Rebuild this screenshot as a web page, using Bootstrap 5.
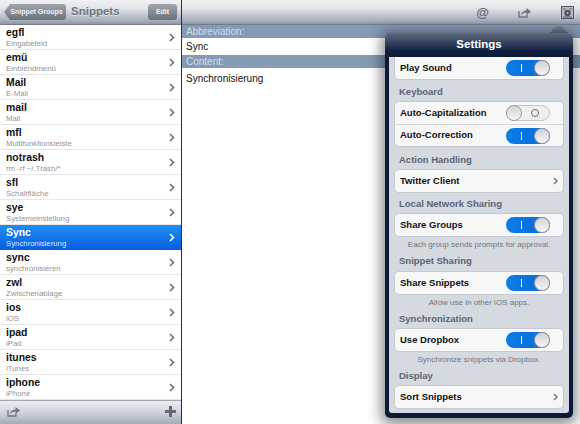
<!DOCTYPE html>
<html lang="en">
<head>
<meta charset="UTF-8">
<title>Snippets</title>
<link rel="stylesheet" href="https://cdn.jsdelivr.net/npm/bootstrap@5.3.3/dist/css/bootstrap.min.css">
<style>
html, body { margin: 0; height: 424px; overflow: hidden; background: #fff; font-family: "Liberation Sans", Arial, sans-serif; }
.app-shell { width: 580px; height: 424px; position: relative; }
.side-pane { width: 181px; height: 424px; border-right: 1px solid #2b2f36; box-sizing: content-box; }
.main-pane { width: 398px; height: 424px; }
.ios-bar { height: 25px; background: linear-gradient(#f1f2f4 0%, #e2e4e8 35%, #a9b0bc 85%, #8f98a6 100%); border-bottom: 1px solid #747d8b; }
.ios-foot { height: 24px; padding: 0 5px 3px 7px; background: linear-gradient(#eceef1 0%, #d3d6dc 45%, #a4abb8 100%); border-top: 1px solid #a5a8ae; }
.back-btn { height: 16px; width: 62px; margin-left: 4px; color: #eef0f3; font-size: 7px; font-weight: 700; line-height: 16px; text-align: center; padding-left: 3px; background: linear-gradient(#a1a6ae, #69707c); clip-path: polygon(6px 0, 100% 0, 100% 100%, 6px 100%, 0 50%); border-radius: 3px; }
.bar-title { color: #6c7583; font-size: 11.5px; font-weight: 700; margin-left: 5px; text-shadow: 0 1px 0 rgba(255,255,255,.5); }
.edit-btn { width: 29px; height: 16px; margin-right: 4px; color: #eef0f3; font-size: 7px; font-weight: 700; line-height: 16px; text-align: center; border-radius: 3px; background: linear-gradient(#a1a6ae, #69707c); }
.snip-row { height: 25px; padding-left: 6px; padding-right: 6px; border-bottom: 1px solid #e6e6e6; background: #fff; }
.snip-text { padding-top: 2px; }
.snip-name { font-size: 10.4px; font-weight: 700; line-height: 11px; color: #111; }
.snip-sub { font-size: 7.8px; line-height: 12px; color: #959595; }
.snip-row.is-picked { background: linear-gradient(#1f8ef2, #0a5fe0); border-bottom-color: #0a5fe0; }
.is-picked .snip-name { color: #fff; }
.is-picked .snip-sub { color: #d5e6fb; }
.field-label { height: 13px; background: #849ab5; color: #d4deea; font-size: 10px; line-height: 13px; padding-left: 4px; }
.field-value { font-size: 10px; color: #111; padding-left: 4px; height: 17px; line-height: 18px; }
.field-value.fills-rest { height: auto; line-height: 15px; padding-top: 3px; }
.tool-icon { display: block; }
.at-icon { color: #5d6675; font-size: 13px; font-weight: 700; line-height: 14px; margin-right: 29px; margin-top: 1px; }
.share-icon { margin-right: 30px; }
.frame-icon { margin-right: 6px; }
.pop-arrow { position: absolute; left: 549px; top: 23px; width: 20px; height: 11px; background: linear-gradient(#8d97a6, #5d6a80); clip-path: polygon(50% 0, 100% 100%, 0 100%); }
.pop-shell { position: absolute; left: 385px; top: 33px; width: 188px; height: 385px; background: linear-gradient(#5d6a80 0, #122040 18px, #0b1a36 26px); border-radius: 5px; padding: 0 4px 5px; box-shadow: 0 3px 14px 4px rgba(0,0,0,.45); }
.pop-title { height: 24px; color: #fff; font-size: 11.5px; font-weight: 700; line-height: 23px; text-align: center; }
.pop-body { height: 356px; background: #d5d9e0; border-radius: 0 0 3px 3px; padding: 0 5px; overflow: hidden; }
.set-card { background: #f7f7f8; border: 1px solid #c6c9cf; border-radius: 5px; }
.set-card.top-cut { border-top: 0; border-radius: 0 0 5px 5px; }
.set-row { height: 22px; padding: 0 5px; font-size: 9.5px; font-weight: 700; color: #111; }
.set-row + .set-row { border-top: 1px solid #d5d6da; }
.set-head { font-size: 9.5px; font-weight: 700; line-height: 14px; color: #5b6577; padding-left: 5px; height: 22px; padding-top: 6px; }
.set-head.head-tight { height: 21px; padding-top: 5px; }
.set-head.head-close { height: 20px; padding-top: 4px; }
.set-head.head-note { height: 20px; padding-top: 3px; }
.set-head.head-note-s { height: 19px; padding-top: 3px; }
.set-note { height: 14px; font-size: 8px; line-height: 15px; color: #6e7686; text-align: center; }
.toggle-on, .toggle-off { width: 44px; height: 16px; border-radius: 8px; position: relative; flex: none; margin-right: 8px; }
.toggle-on { background: linear-gradient(90deg, #0a7fe8 0, #0a6fdc 60%, #3a7fd0 100%); }
.toggle-off { background: #efeff0; border: 1px solid #c4c6ca; }
.toggle-on::before { content: ""; position: absolute; left: 15px; top: 4px; width: 1px; height: 8px; background: #fff; }
.toggle-on::after, .toggle-off::after { content: ""; position: absolute; top: 0; width: 16px; height: 16px; border-radius: 50%; background: linear-gradient(#d2d3d6, #f6f6f6); border: 1px solid #9a9da3; }
.toggle-on::after { right: 0; }
.toggle-off::after { left: -1px; top: -1px; }
.off-ring { position: absolute; left: 24px; top: 3px; width: 8px; height: 8px; border-radius: 50%; border: 1px solid #6f7278; }
</style>
</head>
<body>
<div class="app-shell d-flex">
  <div class="side-pane d-flex flex-column">
    <div class="ios-bar d-flex align-items-center">
      <div class="back-btn">Snippet Groups</div>
      <div class="bar-title flex-grow-1">Snippets</div>
      <div class="edit-btn">Edit</div>
    </div>
    <div id="snipList" class="flex-grow-1 overflow-hidden"></div>
    <div class="ios-foot d-flex align-items-center justify-content-between">
      <svg class="tool-icon" width="13" height="11" viewBox="0 0 13 11"><path d="M1 4v6h8V7.5" fill="none" stroke="#6b7482" stroke-width="1.3"/><path d="M3 8c.5-3 2.500-4.500 5.500-4.500V1L13 4.500 8.500 8V5.500C6 5.500 4.500 6.300 3 8z" fill="#6b7482"/></svg>
      <svg class="tool-icon" width="11" height="11" viewBox="0 0 11 11"><path d="M4 0h3v4h4v3H7v4H4V7H0V4h4z" fill="#5f6977"/></svg>
    </div>
  </div>
  <div class="main-pane d-flex flex-column">
    <div class="ios-bar d-flex align-items-center justify-content-end">
      <span class="at-icon">@</span>
      <svg class="tool-icon share-icon" width="13" height="11" viewBox="0 0 13 11"><path d="M1 4v6h8V7.500" fill="none" stroke="#6b7482" stroke-width="1.300"/><path d="M3 8c.5-3 2.500-4.500 5.500-4.500V1L13 4.500 8.500 8V5.500C6 5.500 4.500 6.300 3 8z" fill="#6b7482"/></svg>
      <svg class="tool-icon frame-icon" width="13" height="13" viewBox="0 0 13 13"><rect x=".5" y=".5" width="12" height="12" fill="#b9bec6" stroke="#4d5663"/><path d="M2 3h2.500M8.500 3H11M2 11h9" stroke="#4d5663" stroke-width="1.200"/><circle cx="6.500" cy="7" r="3.300" fill="#4d5663"/><circle cx="6.500" cy="7" r="1" fill="#b9bec6"/></svg>
    </div>
    <div class="field-label">Abbreviation:</div>
    <div class="field-value">Sync</div>
    <div class="field-label">Content:</div>
    <div class="field-value fills-rest">Synchronisierung</div>
  </div>
  <div class="pop-arrow"></div>
  <div class="pop-shell">
    <div class="pop-title">Settings</div>
    <div class="pop-body">
      <div class="set-card top-cut"><div class="set-row d-flex align-items-center justify-content-between">Play Sound<span class="toggle-on"></span></div></div>
      <div class="set-head head-tight">Keyboard</div>
      <div class="set-card">
        <div class="set-row d-flex align-items-center justify-content-between">Auto-Capitalization<span class="toggle-off"><span class="off-ring"></span></span></div>
        <div class="set-row d-flex align-items-center justify-content-between">Auto-Correction<span class="toggle-on"></span></div>
      </div>
      <div class="set-head">Action Handling</div>
      <div class="set-card"><div class="set-row d-flex align-items-center justify-content-between">Twitter Client<svg width="5" height="8" viewBox="0 0 5 8"><path d="M1 1l3 3-3 3" fill="none" stroke="#6b7079" stroke-width="1.400"/></svg></div></div>
      <div class="set-head head-close">Local Network Sharing</div>
      <div class="set-card"><div class="set-row d-flex align-items-center justify-content-between">Share Groups<span class="toggle-on"></span></div></div>
      <div class="set-note">Each group sends prompts for approval.</div>
      <div class="set-head head-note">Snippet Sharing</div>
      <div class="set-card"><div class="set-row d-flex align-items-center justify-content-between">Share Snippets<span class="toggle-on"></span></div></div>
      <div class="set-note">Allow use in other iOS apps.</div>
      <div class="set-head head-note-s">Synchronization</div>
      <div class="set-card"><div class="set-row d-flex align-items-center justify-content-between">Use Dropbox<span class="toggle-on"></span></div></div>
      <div class="set-note">Synchronize snippets via Dropbox.</div>
      <div class="set-head head-note-s">Display</div>
      <div class="set-card"><div class="set-row d-flex align-items-center justify-content-between">Sort Snippets<svg width="5" height="8" viewBox="0 0 5 8"><path d="M1 1l3 3-3 3" fill="none" stroke="#6b7079" stroke-width="1.400"/></svg></div></div>
    </div>
  </div>
</div>
<script>
const snippets = [['egfl','Eingabefeld'],['emü','Einblendmenü'],['Mail','E-Mail'],['mail','Mail'],['mfl','Multifunktionsleiste'],['notrash','rm -rf ~/.Trash/*'],['sfl','Schaltfläche'],['sye','Systemeinstellung'],['Sync','Synchronisierung'],['sync','synchronisieren'],['zwl','Zwischenablage'],['ios','iOS'],['ipad','iPad'],['itunes','iTunes'],['iphone','iPhone']];
document.getElementById('snipList').innerHTML = snippets.map(s => {
  const picked = s[0] === 'Sync';
  return `<div class="snip-row d-flex align-items-center justify-content-between ${picked ? 'is-picked' : ''}">
    <div class="snip-text"><div class="snip-name">${s[0]}</div><div class="snip-sub">${s[1]}</div></div>
    <svg width="6" height="9" viewBox="0 0 6 9"><path d="M1 1l3.500 3.500L1 8" fill="none" stroke="${picked ? '#fff' : '#6f747c'}" stroke-width="1.700"/></svg>
  </div>`;
}).join('');
</script>
<script src="https://cdn.jsdelivr.net/npm/bootstrap@5.3.3/dist/js/bootstrap.bundle.min.js"></script>
</body>
</html>
